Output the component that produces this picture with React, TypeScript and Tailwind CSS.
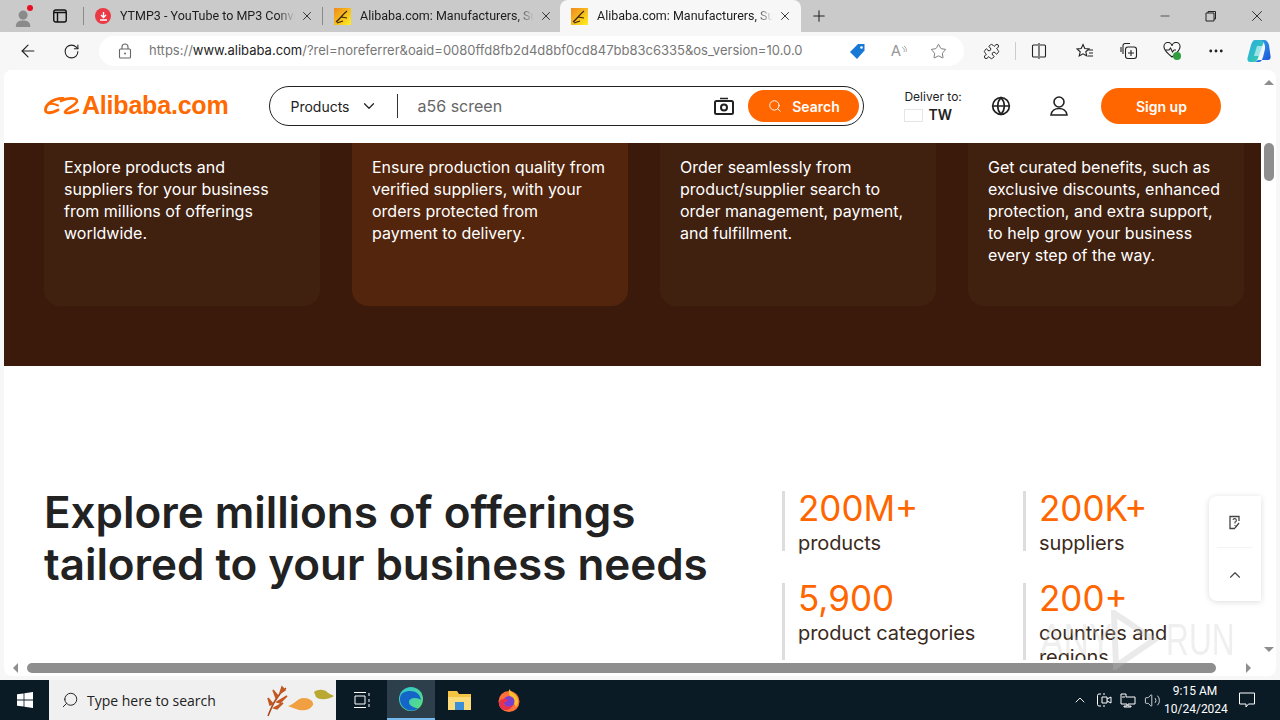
import { ArrowLeft, RotateCw, Star, Puzzle, Plus, X, Minus, ChevronDown, ChevronUp, Search, Globe, MoreHorizontal, Volume2 } from "lucide-react";

const cards = [
  { text: "Explore products and suppliers for your business from millions of offerings worldwide.", active: false, narrow: true },
  { text: "Ensure production quality from verified suppliers, with your orders protected from payment to delivery.", active: true, narrow: false },
  { text: "Order seamlessly from product/supplier search to order management, payment, and fulfillment.", active: false, narrow: false },
  { text: "Get curated benefits, such as exclusive discounts, enhanced protection, and extra support, to help grow your business every step of the way.", active: false, narrow: false },
];

const stats = [
  { value: "200M+", label: "products", top: true },
  { value: "200K+", label: "suppliers", top: true },
  { value: "5,900", label: "product categories", top: false },
  { value: "200+", label: "countries and regions", top: false },
];

function Favicon() {
  return (
    <svg width="17" height="17" viewBox="0 0 17 17" className="shrink-0">
      <defs>
        <linearGradient id="fav" x1="0" y1="0" x2="1" y2="1">
          <stop offset="0" stopColor="#f08a1d" />
          <stop offset="0.6" stopColor="#f7c51e" />
          <stop offset="1" stopColor="#fff01f" />
        </linearGradient>
      </defs>
      <rect width="17" height="17" fill="url(#fav)" />
      <path d="M2 14C6 11 8 7 13 3M7 9l6 1M3 15l6-2" stroke="#3a2408" strokeWidth="1.2" fill="none" />
    </svg>
  );
}

function Tab({ title, active, icon }: { title: string; active?: boolean; icon: React.ReactNode }) {
  return (
    <div className={`flex h-[32px] items-center pl-[11px] pr-[9px] ${active ? "-ml-[2px] w-[241px] rounded-t-lg bg-[#f7f7f7]" : "w-[239px]"}`}>
      {icon}
      <span className="ml-[9px] w-[176px] overflow-hidden whitespace-nowrap font-['Roboto',sans-serif] text-[12.5px] text-[#1c1c1c] [mask-image:linear-gradient(to_right,black_90%,transparent)]">
        {title}
      </span>
      <X size={14} strokeWidth={1.5} className="ml-[5px] shrink-0 text-[#222]" />
    </div>
  );
}

function Logo() {
  return (
    <div className="flex items-center">
      <svg width="35" height="18" viewBox="0 0 35 18" fill="none" stroke="#ff6a00" strokeLinecap="round">
        <path d="M19 1.500C10 1 2 7 1.500 12.500C1 17 7 16.500 14 13" strokeWidth="2.8" />
        <path d="M6 7C9 6.500 12 7.500 14 8.500" strokeWidth="2" />
        <path d="M17 4C22 1 33 0 33 4C33 8 21 12 21 15C21 17 28 16 34 13" strokeWidth="2.6" />
      </svg>
      <span className="ml-[3px] font-['Liberation_Sans',sans-serif] text-[25px] font-bold tracking-[-0.2px] text-[#ff6a00]">
        Alibaba.com
      </span>
    </div>
  );
}

function Header() {
  return (
    <div className="flex h-[73px] shrink-0 items-center bg-white pb-[1px] pl-[40px]">
      <Logo />
      <div className="ml-[41px] flex h-[40px] w-[595px] items-center rounded-full border border-[#222] pl-[20px] pr-[4px]">
        <span className="text-[14px] text-[#222]">Products</span>
        <ChevronDown size={18} strokeWidth={1.6} className="ml-[10px] text-[#222]" />
        <div className="ml-[19px] h-[24px] w-px bg-[#333]" />
        <span className="ml-[20px] text-[16px] text-[#666]">a56 screen</span>
        <svg width="20" height="18" viewBox="0 0 20 18" className="ml-auto text-[#222]">
          <path d="M6 1.500h8" stroke="currentColor" strokeWidth="1.6" />
          <rect x="1" y="4" width="18" height="13" rx="1.500" fill="none" stroke="currentColor" strokeWidth="2" />
          <circle cx="10" cy="10.500" r="3" fill="none" stroke="currentColor" strokeWidth="2" />
        </svg>
        <div className="ml-[14px] flex h-[32px] w-[111px] items-center justify-center rounded-full bg-[#ff6600] text-white">
          <Search size={14} strokeWidth={1.6} />
          <span className="ml-[10px] text-[14px] font-semibold">Search</span>
        </div>
      </div>
      <div className="ml-[40px] w-[60px] text-[12px] leading-[18px] text-[#222]">
        <div>Deliver to:</div>
        <div className="flex items-center">
          <span className="h-[13px] w-[19px] border border-[#e5e5e5]" />
          <span className="ml-[5px] text-[14px] font-semibold">TW</span>
        </div>
      </div>
      <Globe size={20} strokeWidth={2} className="ml-[27px] text-[#222]" />
      <svg width="18" height="20" viewBox="0 0 18 20" fill="none" stroke="#222" strokeWidth="1.6" className="ml-[39px]">
        <circle cx="9" cy="6" r="5" />
        <path d="M1 19C1.500 15 5 12.500 9 12.500S16.500 15 17 19z" />
      </svg>
      <div className="ml-[33px] flex h-[36px] w-[120px] items-center justify-center rounded-full bg-[#ff6600] text-[14px] font-semibold text-white">
        Sign up
      </div>
    </div>
  );
}

function Benefits() {
  return (
    <div className="flex h-[223px] shrink-0 gap-[32px] bg-[#3b1a0b] pl-[40px] pr-[17px]">
      {cards.map((card) => (
        <div
          key={card.text}
          className={`h-[163px] w-[276px] rounded-b-2xl pl-[20px] pt-[13px] text-[16px] leading-[22px] text-white ${card.narrow ? "pr-[40px]" : "pr-[20px]"} ${card.active ? "bg-[#52250c]" : "bg-[#40200f]"}`}
        >
          {card.text}
        </div>
      ))}
    </div>
  );
}

function Explore() {
  return (
    <div className="flex flex-1 bg-white pl-[40px] pt-[120px]">
      <h2 className="w-[738px] shrink-0 whitespace-nowrap text-[44px] font-semibold leading-[52px] tracking-[-0.05px] text-[#222]">
        Explore millions of offerings
        <br />
        tailored to your business needs
      </h2>
      <div className="mt-[5px] grid w-[482px] shrink-0 grid-cols-2 grid-rows-[60px_auto] gap-y-[32px] self-start">
        {stats.map((s) => (
          <div key={s.value} className={`border-l-[3px] border-[#ddd] pl-[13px] pr-[40px] ${s.top ? "pt-[2px]" : ""}`}>
            <div className="text-[35px] leading-[30px] text-[#ff6600]">{s.value}</div>
            <div className="mt-[8px] text-[20px] leading-[24px] tracking-[-0.1px] text-[#3a2a1c]">{s.label}</div>
          </div>
        ))}
      </div>
    </div>
  );
}

function TopBar() {
  return (
    <>
      <div className="flex h-[32px] shrink-0 items-end bg-[#cacaca]">
        <div className="relative ml-[14px] flex h-[32px] w-[20px] items-center">
          <svg width="22" height="24" viewBox="0 0 22 24">
            <circle cx="10" cy="11" r="5" fill="#8a8a8a" />
            <path d="M2 24c0-6 4-7 8-7s8 1 8 7z" fill="#8a8a8a" />
          </svg>
          <span className="absolute left-[13px] top-[5px] h-[6px] w-[6px] rounded-full bg-[#e81123]" />
        </div>
        <div className="ml-[19px] flex h-[32px] w-[14px] items-center">
          <svg width="14" height="14" viewBox="0 0 14 14">
            <rect x="0.75" y="1" width="12.5" height="12" rx="2" fill="none" stroke="#111" strokeWidth="1.4" />
            <path d="M1 3.500h12M4.500 4v9" stroke="#111" strokeWidth="1.4" />
          </svg>
        </div>
        <div className="ml-[16px] mb-[7px] h-[18px] w-px bg-[#8a8a8a]" />
        <Tab
          title="YTMP3 - YouTube to MP3 Converter"
          icon={
            <span className="flex h-[16px] w-[16px] shrink-0 items-center justify-center rounded-full bg-[#ea3a45]">
              <svg width="9" height="9" viewBox="0 0 9 9">
                <path d="M4.500 0v5M2 3l2.500 2.500L7 3M1 8h7" stroke="#fff" strokeWidth="1.4" fill="none" />
              </svg>
            </span>
          }
        />
        <div className="-ml-[1px] mb-[7px] h-[18px] w-px bg-[#8a8a8a]" />
        <Tab title="Alibaba.com: Manufacturers, Suppliers" icon={<Favicon />} />
        <Tab title="Alibaba.com: Manufacturers, Suppliers" icon={<Favicon />} active />
        <Plus size={18} strokeWidth={1.4} className="mb-[7px] ml-[9px] text-[#222]" />
        <div className="ml-auto flex h-[32px] items-center text-[#222]">
          <Minus size={14} strokeWidth={1.2} />
          <svg width="12" height="12" viewBox="0 0 12 12" className="ml-[33px]">
            <path d="M3 3V1.500h7.500V9H9M1 3h8v8H1z" fill="none" stroke="#222" strokeWidth="1" />
          </svg>
          <X size={18} strokeWidth={1.2} className="ml-[31px] mr-[14px]" />
        </div>
      </div>
      <div className="flex h-[38px] shrink-0 items-center bg-[#f7f7f7] text-[#222]">
        <ArrowLeft size={20} strokeWidth={1.4} className="ml-[18px]" />
        <RotateCw size={17} strokeWidth={1.5} className="ml-[25px]" />
        <div className="ml-[19px] flex h-[30px] w-[865px] items-center rounded-full bg-white pl-[19px]">
          <svg width="14" height="16" viewBox="0 0 14 16">
            <path d="M4 6V4a3 3 0 0 1 6 0v2" fill="none" stroke="#666" strokeWidth="1.1" />
            <rect x="1.500" y="6" width="11" height="9" rx="1" fill="none" stroke="#666" strokeWidth="1.1" />
            <circle cx="7" cy="10.500" r="1" fill="#666" />
          </svg>
          <span className="ml-[17px] text-[13px] whitespace-nowrap text-[#777]">
            https://<span className="text-[#222]">www.alibaba.com</span>/?rel=noreferrer&amp;oaid=0080ffd8fb2d4d8bf0cd847bb83c6335&amp;os_version=10.0.0
          </span>
          <svg width="17" height="17" viewBox="0 0 17 17" className="ml-auto">
            <path d="M9 1h6.500v6.500L8 16 1 9z" fill="#1878d6" />
            <circle cx="12.500" cy="4.500" r="1.300" fill="#fff" />
          </svg>
          <span className="ml-[25px] text-[15px] text-[#999]">A</span>
          <svg width="6" height="12" viewBox="0 0 6 12">
            <path d="M1 2c2 1 3 3 2 5M3 1c2 1 3 4 2 6" fill="none" stroke="#999" strokeWidth="0.8" />
          </svg>
          <Star size={17} strokeWidth={1.2} className="ml-[23px] mr-[17px] text-[#666]" />
        </div>
        <Puzzle size={17} strokeWidth={1.4} className="ml-[19px]" />
        <div className="ml-[15px] h-[18px] w-px bg-[#ccc]" />
        <svg width="16" height="16" viewBox="0 0 16 16" className="ml-[15px]">
          <path d="M7 2H2.500a1 1 0 0 0-1 1v10a1 1 0 0 0 1 1H7M9 2h4.500a1 1 0 0 1 1 1v10a1 1 0 0 1-1 1H9M8 0v16" fill="none" stroke="#222" strokeWidth="1.1" />
        </svg>
        <svg width="18" height="16" viewBox="0 0 18 16" className="ml-[29px]">
          <path d="M7 1.500l1.800 4 4.200.4-3.200 2.900 1 4.200L7 10.800l-3.800 2.200 1-4.200L1 5.900l4.200-.4zM12 7h5M13 10h4M12 13h5" fill="none" stroke="#222" strokeWidth="1.1" />
        </svg>
        <svg width="18" height="18" viewBox="0 0 18 18" className="ml-[26px]">
          <path d="M3 12V3.500A2 2 0 0 1 5 1.500h5M1 10V5" fill="none" stroke="#222" strokeWidth="1.1" />
          <rect x="5.500" y="5" width="11" height="11.500" rx="2.500" fill="none" stroke="#222" strokeWidth="1.1" />
          <path d="M11 8v6M8 11h6" stroke="#222" strokeWidth="1.1" />
        </svg>
        <div className="relative ml-[25px] h-[18px] w-[18px]">
          <svg width="18" height="16" viewBox="0 0 18 16">
            <path d="M9 15C4 11 1 8 1 5a4 4 0 0 1 8-1 4 4 0 0 1 8 1c0 3-3 6-8 10zM2 8h4l1.500-2 2 4 1.500-2h2" fill="none" stroke="#222" strokeWidth="1.1" />
          </svg>
          <span className="absolute bottom-0 right-0 flex h-[8px] w-[8px] items-center justify-center rounded-full bg-[#2e9e3e]" />
        </div>
        <MoreHorizontal size={18} strokeWidth={1.8} className="ml-[26px]" />
        <svg width="24" height="22" viewBox="0 0 24 22" className="ml-[22px]">
          <defs>
            <linearGradient id="copA" x1="0" y1="0" x2="1" y2="1">
              <stop offset="0" stopColor="#2aa8e8" />
              <stop offset="1" stopColor="#35d3a0" />
            </linearGradient>
            <linearGradient id="copB" x1="0" y1="0" x2="1" y2="1">
              <stop offset="0" stopColor="#38b6f0" />
              <stop offset="1" stopColor="#1a4fd8" />
            </linearGradient>
          </defs>
          <path d="M8 0h7c2 0 2 2 1 4l-5 14c-1 3-3 4-5 4H3c-2 0-3-2-2.500-4L4 5c1-3 2-5 4-5z" fill="url(#copA)" />
          <path d="M14 0h3c3 0 4 2 5 5l1.500 11c.5 3-1 4-3 4H11c-2 2-5 2-6 2h7c3 0 3-3 4-5l2-8c.5-3-1-8-4-9z" fill="url(#copB)" />
          <path d="M10 6h7l-3 10H7z" fill="#d8f6ff" opacity="0.65" />
        </svg>
      </div>
    </>
  );
}

function Taskbar() {
  return (
    <div className="flex h-[40px] shrink-0 items-center bg-[#0b1b26] text-white">
      <div className="flex w-[49px] justify-center">
        <svg width="16" height="16" viewBox="0 0 16 16">
          <path d="M0 2.300l6.600-.9v6.200H0zM7.400 1.300L16 0v7.600H7.400zM0 8.400h6.600v6.200L0 13.700zM7.400 8.400H16V16l-8.600-1.300z" fill="#fff" />
        </svg>
      </div>
      <div className="flex h-[40px] w-[287px] items-center bg-[#f0f0f0] pl-[12px] text-[#222]">
        <Search size={18} strokeWidth={1.3} className="-scale-x-100" />
        <span className="ml-[8px] font-['Open_Sans',sans-serif] text-[14px]">Type here to search</span>
        <svg width="72" height="36" viewBox="0 0 72 36" className="ml-auto">
          <path d="M4 34C8 24 12 14 22 6" stroke="#a8481c" strokeWidth="1.5" fill="none" />
          <path d="M9 22l-5-6 2 7zM12 16l-3-8 5 6zM16 11l2-6 3 3zM10 26l9-5-6 6zM13 20l10-6-7 7z" fill="#c4561f" stroke="#c4561f" strokeWidth="1.500" />
          <path d="M24 24c6-1 9-8 16-8 5 0 10 3 9 7-3 5-9 6-14 5-4-1-8-3-11-4z" fill="#f0a040" />
          <path d="M50 10c4-3 11-3 14 1l6 3c-4 3-14 5-18 1z" fill="#b9a832" />
        </svg>
      </div>
      <div className="flex w-[51px] justify-center">
        <svg width="16" height="16" viewBox="0 0 16 16">
          <path d="M0 .5h12M0 15.500h12M1 4h10v8H1zM15 1v3M15 7v3M15 12v3" fill="none" stroke="#fff" strokeWidth="1" />
        </svg>
      </div>
      <div className="flex h-[40px] w-[48px] items-center justify-center border-b-2 border-[#76b9ed] bg-[#2e3f4c]">
        <svg width="24" height="24" viewBox="0 0 24 24">
          <defs>
            <linearGradient id="edge" x1="0" y1="0" x2="1" y2="1">
              <stop offset="0" stopColor="#2ec4d6" />
              <stop offset="1" stopColor="#5ee07a" />
            </linearGradient>
          </defs>
          <circle cx="12" cy="12" r="12" fill="url(#edge)" />
          <path d="M1 12C1 6 6 4 11 4c6 0 10 3 11 9-3-3-12-3-12 2 0 4 6 6 9 6-3 3-7 3-10 2-5-2-8-6-8-11z" fill="#1565c8" />
        </svg>
      </div>
      <div className="flex w-[48px] justify-center">
        <svg width="23" height="20" viewBox="0 0 23 20">
          <path d="M0 1h9l2 3h12v16H0z" fill="#f5c443" />
          <path d="M0 7h23v13H0z" fill="#fcdc7a" />
          <rect x="7" y="12" width="9" height="8" fill="#3a8fd8" />
        </svg>
      </div>
      <div className="ml-[2px] flex w-[48px] justify-center">
        <svg width="24" height="24" viewBox="0 0 24 24">
          <circle cx="12" cy="13.500" r="10.500" fill="#ff7139" />
          <path d="M12 1c2 3 6 4 8 8 2 4 1 8-1 10L12 6z" fill="#ffbd2e" />
          <circle cx="12" cy="13.500" r="5.500" fill="#7b3fd0" />
          <path d="M2 14c2-4 7-4 9-2-1 2-4 2-4 4 1 3 6 3 9 1-2 5-8 6-11 4-2-1-3-4-3-7z" fill="#e8304f" />
        </svg>
      </div>
      <div className="ml-auto flex items-center">
        <ChevronUp size={16} strokeWidth={1.4} />
        <svg width="16" height="16" viewBox="0 0 16 16" className="ml-[8px]">
          <path d="M5 2H3a1.500 1.500 0 0 0-1.500 1.500v9A1.500 1.500 0 0 0 3 14h2M9 2h-2M9 14H7M6 5h5v6H6zM11 7l4-2v6l-4-2" fill="none" stroke="#fff" strokeWidth="1" />
        </svg>
        <svg width="16" height="16" viewBox="0 0 16 16" className="ml-[8px]">
          <path d="M1 2h5v3h9v7H8v2h3v1H4v-1h3v-2H1zM2 5h3" fill="none" stroke="#fff" strokeWidth="1" />
        </svg>
        <Volume2 size={17} strokeWidth={1.1} className="ml-[8px]" />
        <div className="ml-[3px] w-[62px] text-center font-['Roboto',sans-serif] text-[12px] leading-[18px]">
          <div>9:15 AM</div>
          <div className="whitespace-nowrap">10/24/2024</div>
        </div>
        <svg width="16" height="16" viewBox="0 0 16 16" className="ml-[13px] mr-[25px]">
          <path d="M.5 1h15v11h-6L7 15v-3H.5z" fill="none" stroke="#fff" strokeWidth="1" />
        </svg>
      </div>
    </div>
  );
}

export default function App() {
  return (
    <div className="flex h-[720px] w-[1280px] flex-col overflow-hidden bg-[#f7f7f7] font-['Inter',sans-serif]">
      <TopBar />
      {/* Browser viewport */}
      <div className="relative flex min-h-0 flex-1 pb-[4px] pl-[4px] pr-[4px]">
        <div className="flex min-w-0 flex-1 flex-col overflow-hidden rounded-lg bg-white">
          <div className="flex min-h-0 flex-1">
            <div className="flex h-[590px] w-[1257px] shrink-0 flex-col overflow-hidden">
              <Header />
              <Benefits />
              <Explore />
            </div>
            {/* Vertical scrollbar */}
            <div className="flex w-[15px] flex-col items-center pt-[10px]">
              <span className="h-0 w-0 border-x-[5px] border-b-[5px] border-x-transparent border-b-[#8e8e8e]" />
              <span className="mt-[58px] h-[38px] w-[10px] rounded-full bg-[#8e8e8e]" />
              <span className="mt-auto mb-[8px] h-0 w-0 border-x-[5px] border-t-[5px] border-x-transparent border-t-[#8e8e8e]" />
            </div>
          </div>
          {/* Horizontal scrollbar */}
          <div className="flex h-[16px] shrink-0 items-center pl-[9px]">
            <span className="h-0 w-0 border-y-[5px] border-r-[5px] border-y-transparent border-r-[#8e8e8e]" />
            <span className="ml-[9px] h-[10px] w-[1189px] rounded-full bg-[#8e8e8e]" />
            <span className="ml-[30px] h-0 w-0 border-y-[5px] border-l-[5px] border-y-transparent border-l-[#8e8e8e]" />
          </div>
        </div>

        {/* Floating helper widget */}
        <div className="absolute left-[1209px] top-[426px] flex h-[105px] w-[52px] flex-col items-center rounded-l-lg bg-white shadow-[0_1px_6px_rgba(0,0,0,0.14)]">
          <svg width="14" height="15" viewBox="0 0 14 15" className="mt-[19px]">
            <path d="M11 6V1.500H2v12h5M11 8l-4 5" fill="none" stroke="#444" strokeWidth="1.3" />
            <path d="M5 5a1.700 1.700 0 1 1 2 2v1.500M7 10v1" fill="none" stroke="#444" strokeWidth="1.1" />
          </svg>
          <div className="mt-[17px] h-px w-[36px] bg-[#f4f4f4]" />
          <ChevronUp size={18} strokeWidth={1.5} className="mt-[18px] text-[#444]" />
        </div>

        {/* Watermark */}
        <div className="pointer-events-none absolute left-[1040px] top-[540px] flex items-center font-['Liberation_Sans',sans-serif] text-[44px] leading-[56px] text-[#ccc] opacity-30">
          <span className="w-[70px] origin-left scale-x-[0.8] whitespace-nowrap">ANY</span>
          <svg width="50" height="60" viewBox="0 0 50 60" className="-ml-[2px]">
            <path d="M6 3l40 27L8 56z" fill="none" stroke="#bbb" strokeWidth="6" />
          </svg>
          <span className="ml-[8px] w-[62px] origin-left scale-x-[0.72] whitespace-nowrap">RUN</span>
        </div>
      </div>
      <Taskbar />
    </div>
  );
}
